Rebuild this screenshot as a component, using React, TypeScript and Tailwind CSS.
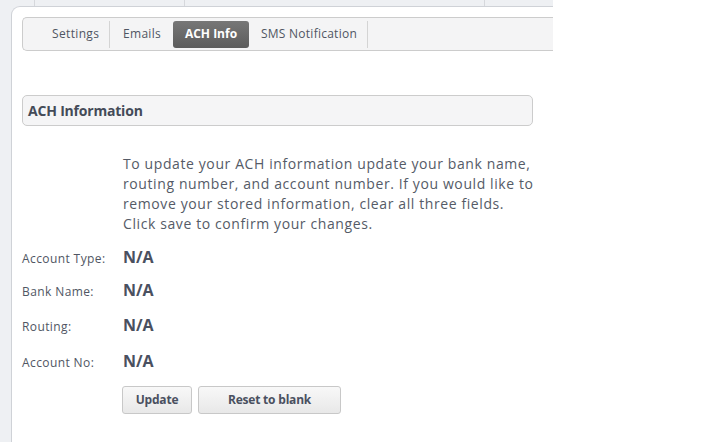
import React from "react";

const font = { fontFamily: '"Open Sans", "DejaVu Sans", sans-serif' };

function Row({ label, value, mt }: { label: string; value: string; mt: string }) {
  return (
    <div className={`flex items-baseline ${mt}`}>
      <div className="w-[101px] text-[12px] tracking-[0.4px] text-[#505663]">{label}</div>
      <div className="text-[16px] leading-[22px] font-bold text-[#4a5060]">{value}</div>
    </div>
  );
}

export default function App() {
  return (
    <div className="w-[727px] h-[442px] bg-white flex overflow-hidden" style={font}>
      <div className="w-[553px] h-full flex flex-col">
        <div className="h-[6px] flex bg-[#eef0f3]">
          <div className="w-[35px] border-r border-[#d6d8dc]" />
          <div className="w-[150px] border-r border-[#d6d8dc]" />
          <div className="w-[300px] border-r border-[#d6d8dc]" />
          <div className="flex-1" />
        </div>
        <div className="flex-1 flex bg-[#eef0f3]">
          <div className="w-[11px]" />
          <div className="flex-1 bg-white rounded-tl-[9px] border-l border-t border-[#cfd2d7] pt-[10px] pl-[10px] flex flex-col">
            {/* Tab bar */}
            <div className="h-[34px] flex items-center border-t border-b border-l border-[#cccccc] rounded-l-[5px] bg-[#f4f4f5]">
              <div className="w-[87px] h-[27px] pl-[29px] flex items-center border-r border-[#d4d4d4] text-[12px] tracking-[0.35px] text-[#505663]">
                Settings
              </div>
              <div className="w-[63px] h-[27px] pl-[13px] flex items-center text-[12px] tracking-[0.3px] text-[#505663]">
                Emails
              </div>
              <div className="w-[76px] h-[27px] flex items-center justify-center rounded-[3px] bg-[linear-gradient(#777777,#5c5c5c)] text-[12px] font-bold text-white">
                ACH Info
              </div>
              <div className="w-[119px] h-[27px] pl-[12px] flex items-center border-r border-[#d4d4d4] text-[12px] tracking-[0.25px] text-[#505663]">
                SMS Notification
              </div>
            </div>

            {/* Header */}
            <div className="mt-[44px] w-[511px] h-[31px] flex items-center pl-[5px] border border-[#cccccc] rounded-[5px] bg-[#f5f5f6] text-[14px] tracking-[-0.2px] font-bold text-[#444b58]">
              ACH Information
            </div>

            {/* Paragraph */}
            <div className="mt-[28px] ml-[101px] text-[14px] leading-[20px] tracking-[0.6px] text-[#555b67] whitespace-nowrap">
              To update your ACH information update your bank name,
              <br />
              routing number, and account number. If you would like to
              <br />
              remove your stored information, clear all three fields.
              <br />
              Click save to confirm your changes.
            </div>

            <Row label="Account Type:" value="N/A" mt="mt-[12px]" />
            <Row label="Bank Name:" value="N/A" mt="mt-[11px]" />
            <Row label="Routing:" value="N/A" mt="mt-[13px]" />
            <Row label="Account No:" value="N/A" mt="mt-[14px]" />

            <div className="mt-[14px] ml-[100px] flex gap-[6px]">
              <button className="w-[70px] h-[28px] border border-[#c8c8c8] rounded-[3px] bg-[linear-gradient(#f8f8f8,#e8e8e8)] text-[12px] tracking-[-0.2px] font-bold text-[#4a5060]">
                Update
              </button>
              <button className="w-[143px] h-[28px] border border-[#c8c8c8] rounded-[3px] bg-[linear-gradient(#f8f8f8,#e8e8e8)] text-[12px] tracking-[-0.2px] font-bold text-[#4a5060]">
                Reset to blank
              </button>
            </div>
          </div>
        </div>
      </div>
      <div className="flex-1 bg-white" />
    </div>
  );
}
